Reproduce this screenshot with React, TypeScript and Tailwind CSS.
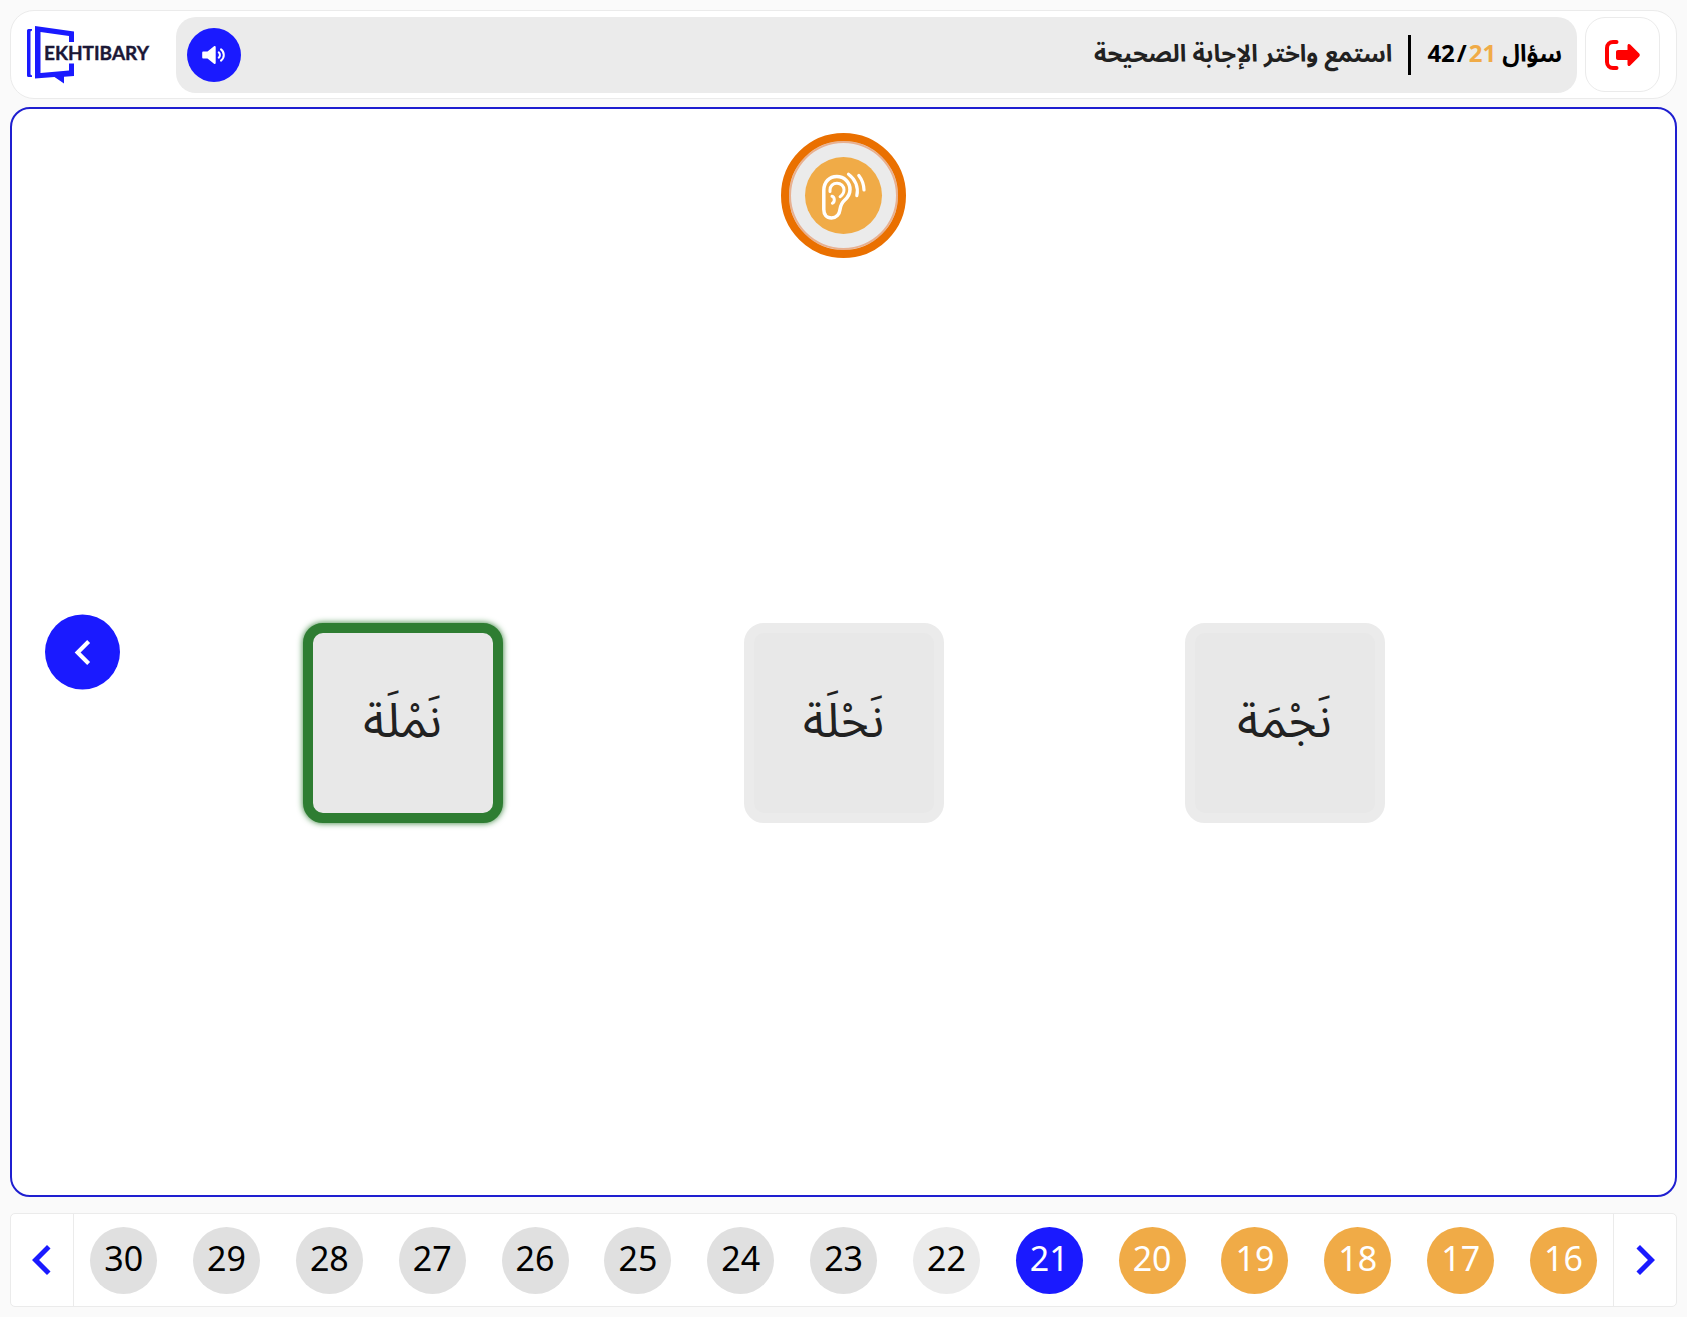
const upcoming = 'bg-[#e0e0e0] text-black';
const next = 'bg-[#ebebeb] text-black';
const current = 'bg-[#1a1aff] text-white';
const done = 'bg-[#f0ab47] text-white';

const questions = [
  { n: 16, tone: done },
  { n: 17, tone: done },
  { n: 18, tone: done },
  { n: 19, tone: done },
  { n: 20, tone: done },
  { n: 21, tone: current },
  { n: 22, tone: next },
  { n: 23, tone: upcoming },
  { n: 24, tone: upcoming },
  { n: 25, tone: upcoming },
  { n: 26, tone: upcoming },
  { n: 27, tone: upcoming },
  { n: 28, tone: upcoming },
  { n: 29, tone: upcoming },
  { n: 30, tone: upcoming },
];

const answers = [
  { word: 'نَجْمَة', selected: false },
  { word: 'نَحْلَة', selected: false },
  { word: 'نَمْلَة', selected: true },
];

function Logo() {
  return (
    <svg width="126" height="60" viewBox="0 0 126 60" direction="ltr" role="img" aria-label="EKHTIBARY">
      <path d="M5 4H1.500Q0 4 0 5.500v45Q0 52 1.500 52H5v-1.500l-1.500-1V6.500l1.500-1z" fill="#1a1aff" />
      <path
        d="M8 1 47 6.500V17h-5v-6L13.500 7v41L42 45.500V38.500h5v12.500l-10 .8v6.700L27.500 52 8 53.500z"
        fill="#1a1aff"
      />
      <text
        x="17"
        y="35"
        fontFamily='Lato, "Open Sans", sans-serif'
        fontSize="19"
        fontWeight="700"
        fill="#1b1836"
        stroke="#1b1836"
        strokeWidth="0.400"
      >
        EKHTIBARY
      </text>
    </svg>
  );
}

function SpeakerIcon() {
  return (
    <svg width="24" height="20" viewBox="0 0 24 20" fill="none" aria-hidden="true">
      <path
        d="M1.500 6.500h4L12 1.300c.8-.6 1.700-.3 1.700.7v16c0 1-.9 1.300-1.700.7L5.500 13.500h-4C.6 13.500.2 13 .2 12.200V7.800c0-.8.4-1.300 1.300-1.300z"
        fill="#fff"
      />
      <path d="M16.700 7.300a3.600 3.600 0 0 1 0 5.400M19 4.400a7 7 0 0 1 0 11.200" stroke="#fff" strokeWidth="2" strokeLinecap="round" />
    </svg>
  );
}

function ExitIcon() {
  return (
    <svg width="36" height="30" viewBox="0 0 36 30" fill="none" aria-hidden="true">
      <path d="M11.500 2H8a6 6 0 0 0-6 6v14a6 6 0 0 0 6 6h3.500" stroke="#f00" strokeWidth="4" strokeLinecap="round" />
      <path
        d="M13 10h9.500V5.800c0-1.700 1.600-2.300 2.700-1.200l9 9c.8.8.8 2 0 2.800l-9 9c-1.100 1.100-2.700.5-2.700-1.200V20H13c-1.200 0-2-.8-2-2v-6c0-1.200.8-2 2-2z"
        fill="#f00"
      />
    </svg>
  );
}

function EarIcon() {
  return (
    <svg width="46" height="50" viewBox="0 0 46 50" fill="none" stroke="#fff" strokeWidth="3.500" strokeLinecap="round" aria-hidden="true">
      <path d="M2.800 19.500C2.800 11 8.500 5.500 15.800 5.500S29 11 29 18.500c0 5-2.200 7.800-5.200 10.500-3.300 3-4.300 5.500-4.800 9.500-.6 5-3.800 8.500-8.500 8.500-5 0-7.700-3.600-7.700-8.500z" />
      <path d="M9 20.500v-1.600c0-3.900 3-6.700 7-6.700s7 2.900 7 6.600c0 3.400-1.400 5.300-3.900 6.900" strokeWidth="3" />
      <path d="M11 25.300c2.600.5 3.300 5.300.4 7" strokeWidth="3" />
      <path d="M27.500 3.200c6.800 4.900 10.300 13 8.300 21.500M37.800 4.500c3.300 4.200 5 9 5.200 14.500" strokeWidth="3.200" />
    </svg>
  );
}

function Chevron({ size, right = false }: { size: number; right?: boolean }) {
  return (
    <svg width={size} height={size} viewBox="0 0 24 24" fill="currentColor" aria-hidden="true">
      <path
        d={
          right
            ? 'M10 6 8.590 7.410 13.170 12l-4.580 4.590L10 18l6-6z'
            : 'M15.410 7.410 14 6l-6 6 6 6 1.410-1.410L10.830 12z'
        }
      />
    </svg>
  );
}

export default function App() {
  return (
    <div
      dir="rtl"
      className="flex min-h-[1317px] flex-col bg-[#fafafa] p-[10px] font-['Noto_Sans','Noto_Sans_Arabic',sans-serif] text-[#212121]"
    >
      <header className="flex items-start gap-2 rounded-3xl border border-[#ebebeb] bg-white px-4 pt-1.5 pb-[5px]">
        <button
          type="button"
          aria-label="خروج"
          className="flex size-[75px] shrink-0 items-center justify-center rounded-[20px] border border-[#ebebeb] bg-white"
        >
          <ExitIcon />
        </button>
        <div className="flex h-[76px] flex-1 items-center rounded-[20px] bg-[#ebebeb] pr-[15px] pl-[11px]">
          <p className="flex items-center pb-1 text-2xl font-bold text-black">
            <span>سؤال</span>
            <span dir="ltr" className="mr-1.5 flex gap-0.5">
              <span>42</span>
              <span>/</span>
              <span className="text-[#f0ab47]">21</span>
            </span>
          </p>
          <span className="mx-4 h-10 w-[3px] bg-black" />
          <h1 className="pb-1 text-2xl font-bold">استمع واختر الإجابة الصحيحة</h1>
          <button
            type="button"
            aria-label="تشغيل الصوت"
            className="mr-auto flex size-[54px] items-center justify-center rounded-full bg-[#1a1aff]"
          >
            <SpeakerIcon />
          </button>
        </div>
        <div className="mr-[15px] self-center">
          <Logo />
        </div>
      </header>

      <main className="relative mt-2 flex flex-1 flex-col items-center rounded-[20px] border-2 border-[#1f1fd0] bg-white px-[170px] pt-6 pb-2">
        <button
          type="button"
          aria-label="استمع"
          className="flex size-[125px] shrink-0 items-center justify-center rounded-full border-8 border-[#ea7000] bg-[#ebebeb] shadow-[inset_0_0_0_2px_#e8b090]"
        >
          <span className="flex size-[77px] items-center justify-center rounded-full bg-[#f0ab47]">
            <EarIcon />
          </span>
        </button>
        <div className="grid w-full flex-1 grid-cols-3 place-items-center">
          {answers.map((a) => (
            <button
              key={a.word}
              type="button"
              aria-pressed={a.selected}
              className={`flex size-[200px] items-center justify-center rounded-[20px] border-10 bg-[#e8e8e8] pb-2 text-5xl ${
                a.selected ? 'border-[#2e7d32] shadow-[0_0_6px_#2e7d32]' : 'border-[#ebebeb]'
              }`}
            >
              {a.word}
            </button>
          ))}
        </div>
        <button
          type="button"
          aria-label="السؤال التالي"
          className="absolute top-1/2 left-[33px] flex size-[75px] -translate-y-1/2 items-center justify-center rounded-full bg-[#1a1aff] text-white"
        >
          <Chevron size={50} />
        </button>
      </main>

      <nav aria-label="الأسئلة" className="mt-4 flex h-[94px] rounded-[5px] border border-[#ebebeb] bg-white">
        <button
          type="button"
          aria-label="السابق"
          className="flex w-[63px] shrink-0 items-center justify-center border-l border-[#ebebeb] text-[#1a1aff]"
        >
          <Chevron size={60} right />
        </button>
        <ol className="flex flex-1 items-center justify-between px-4">
          {questions.map((q) => (
            <li key={q.n}>
              <button
                type="button"
                className={`flex size-[67px] items-center justify-center rounded-full pb-1 text-[34px] leading-none ${q.tone}`}
              >
                {q.n}
              </button>
            </li>
          ))}
        </ol>
        <button
          type="button"
          aria-label="التالي"
          className="flex w-[63px] shrink-0 items-center justify-center border-r border-[#ebebeb] text-[#1a1aff]"
        >
          <Chevron size={60} />
        </button>
      </nav>
    </div>
  );
}
